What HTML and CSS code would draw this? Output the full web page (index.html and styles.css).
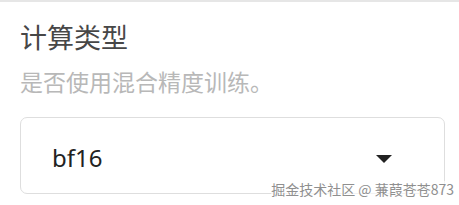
FILE: index.html
```html
<!DOCTYPE html>
<html lang="zh-CN">
<head>
    <meta charset="UTF-8">
    <meta name="viewport" content="width=device-width, initial-scale=1.0">
    <title>计算类型</title>
    <link rel="stylesheet" href="styles.css">
</head>
<body>
    <div class="top-bar"></div>

    <div class="field">
        <h2 class="field-label">计算类型</h2>
        <p class="field-help">是否使用混合精度训练。</p>
        <div class="select">
            <span class="select-value">bf16</span>
            <span class="select-arrow"></span>
        </div>
    </div>

    <div class="watermark">掘金技术社区 @ 蒹葭苍苍873</div>
</body>
</html>
```

FILE: styles.css
```css
body {
    margin: 0;
    padding: 0;
    background: #fff;
    font-family: "Noto Sans CJK SC", "Noto Sans", sans-serif;
    position: relative;
    height: 205px;
    overflow: hidden;
}

.top-bar {
    height: 2px;
    background-color: #e6e6e6;
}

.field {
    padding: 0 14px 0 20px;
}

.field-label {
    margin: 21px 0 0 0;
    font-size: 27px;
    line-height: 27px;
    font-weight: 400;
    color: #474747;
}

.field-help {
    margin: 20px 0 0 0;
    font-size: 23px;
    line-height: 23px;
    color: #b8b8b8;
}

.select {
    display: flex;
    justify-content: space-between;
    align-items: flex-start;
    box-sizing: border-box;
    height: 77px;
    margin-top: 24px;
    padding: 28px 52px 0 31px;
    border: 1px solid #dedede;
    border-radius: 7px;
}

.select-value {
    font-family: "Noto Sans", sans-serif;
    font-size: 24px;
    line-height: 24px;
    color: #222;
}

.select-arrow {
    width: 0;
    height: 0;
    margin-top: 9px;
    border-left: 8px solid transparent;
    border-right: 8px solid transparent;
    border-top: 8px solid #222;
}

.watermark {
    position: absolute;
    right: 5px;
    top: 181px;
    font-size: 14px;
    line-height: 16px;
    color: #8f8f8f;
    text-shadow: 0 0 2px #fff, 0 0 2px #fff, 0 0 2px #fff;
    background: rgba(255, 255, 255, 0.6);
}
```
